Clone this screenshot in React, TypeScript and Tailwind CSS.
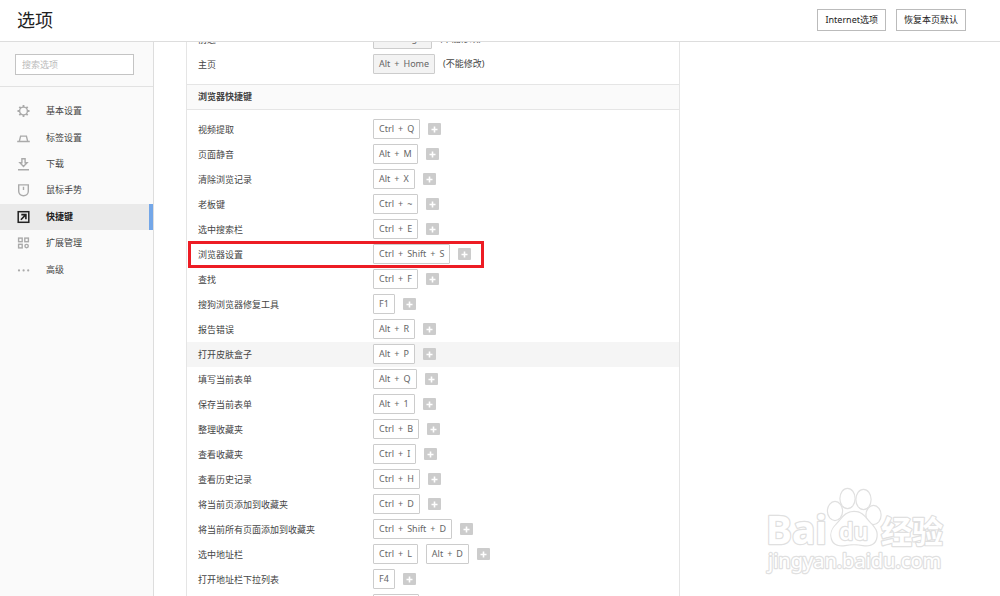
import { Fragment } from 'react';
import type { ReactNode } from 'react';

type Shortcut = {
  label: string;
  keys: string[];
  locked?: boolean;
  hovered?: boolean;
  marked?: boolean;
};

const pageShortcuts: Shortcut[] = [
  { label: '前进', keys: ['Alt + Right'], locked: true },
  { label: '主页', keys: ['Alt + Home'], locked: true },
];

const browserShortcuts: Shortcut[] = [
  { label: '视频提取', keys: ['Ctrl + Q'] },
  { label: '页面静音', keys: ['Alt + M'] },
  { label: '清除浏览记录', keys: ['Alt + X'] },
  { label: '老板键', keys: ['Ctrl + ~'] },
  { label: '选中搜索栏', keys: ['Ctrl + E'] },
  { label: '浏览器设置', keys: ['Ctrl + Shift + S'], marked: true },
  { label: '查找', keys: ['Ctrl + F'] },
  { label: '搜狗浏览器修复工具', keys: ['F1'] },
  { label: '报告错误', keys: ['Alt + R'] },
  { label: '打开皮肤盒子', keys: ['Alt + P'], hovered: true },
  { label: '填写当前表单', keys: ['Alt + Q'] },
  { label: '保存当前表单', keys: ['Alt + 1'] },
  { label: '整理收藏夹', keys: ['Ctrl + B'] },
  { label: '查看收藏夹', keys: ['Ctrl + I'] },
  { label: '查看历史记录', keys: ['Ctrl + H'] },
  { label: '将当前页添加到收藏夹', keys: ['Ctrl + D'] },
  { label: '将当前所有页面添加到收藏夹', keys: ['Ctrl + Shift + D'] },
  { label: '选中地址栏', keys: ['Ctrl + L', 'Alt + D'] },
  { label: '打开地址栏下拉列表', keys: ['F4'] },
  { label: '刷新', keys: ['Ctrl + R'] },
];

function Icon({ children }: { children: ReactNode }) {
  return (
    <svg viewBox="0 0 14 14" className="size-3.5 shrink-0" fill="none" stroke="currentColor" strokeWidth="1.4" aria-hidden="true">
      {children}
    </svg>
  );
}

const navItems: { label: string; icon: ReactNode; active?: boolean }[] = [
  {
    label: '基本设置',
    icon: (
      <>
        <circle cx="7.500" cy="7" r="3.9" />
        <path d="M7.500 1v2M7.500 11v2M1.500 7h2M11.500 7h2M3.300 2.800l1.400 1.400M10.300 9.800l1.400 1.400M3.300 11.200l1.400-1.400M10.300 4.200l1.400-1.400" strokeWidth="1.8" />
      </>
    ),
  },
  { label: '标签设置', icon: <path d="M1.200 10.500h12.600M3.300 10.300l1.300-5.200h5.800l1.300 5.200" /> },
  { label: '下载', icon: <path d="M5.900 1.700h3.200v4h2L7.500 9.500 3.900 5.700h2zM2 12.700h11" /> },
  { label: '鼠标手势', icon: <path d="M2.700 1.900h9.600v6.300c0 2.600-2.100 4.500-4.800 4.500s-4.800-1.900-4.800-4.500zM7.500 3.700v3.300" /> },
  {
    label: '快捷键',
    active: true,
    icon: (
      <>
        <rect x="2.200" y="1.700" width="10.600" height="10.600" strokeWidth="1.500" />
        <path d="M4.900 9.700l4.700-4.800M5.300 4.600h4.600v4.600" strokeWidth="1.600" />
      </>
    ),
  },
  {
    label: '扩展管理',
    icon: (
      <>
        <rect x="2.600" y="2.100" width="3.600" height="3.600" />
        <rect x="8.800" y="2.100" width="3.600" height="3.600" />
        <rect x="2.600" y="8.300" width="3.600" height="3.600" />
        <circle cx="10.600" cy="10.100" r="1.700" />
      </>
    ),
  },
  {
    label: '高级',
    icon: (
      <g fill="currentColor" stroke="none">
        <circle cx="3" cy="7.400" r="1.100" />
        <circle cx="7.600" cy="7.400" r="1.100" />
        <circle cx="12.200" cy="7.400" r="1.100" />
      </g>
    ),
  },
];

function KeyCombo({ combo, locked }: { combo: string; locked?: boolean }) {
  return (
    <button
      type="button"
      disabled={locked}
      className={
        locked
          ? 'flex h-5 items-center gap-1 rounded-[1px] border border-[#ccc] bg-[#f3f3f3] px-[5px] text-[#666]'
          : 'flex h-5 items-center gap-1 rounded-[1px] border border-[#ccc] bg-white px-[5px] text-[#666]'
      }
    >
      {combo.split(' + ').map((name, index) => (
        <Fragment key={name}>
          {index > 0 && <span>+</span>}
          <span>{name}</span>
        </Fragment>
      ))}
    </button>
  );
}

function ShortcutTable({ caption, rows }: { caption: string; rows: Shortcut[] }) {
  return (
    <table aria-label={caption} className="my-[7px] w-full table-fixed border-collapse">
      <tbody>
        {rows.map((row) => (
          <tr key={row.label} className={row.hovered ? 'h-[25px] bg-[#f5f5f5]' : 'h-[25px]'}>
            <th scope="row" className="relative w-[186px] p-0 pl-[11px] text-left font-normal whitespace-nowrap">
              {row.label}
              {row.marked && (
                <span className="pointer-events-none absolute -top-px left-px z-10 h-[27px] w-[296px] border-[3px] border-[#ed1c24]" />
              )}
            </th>
            <td className="p-0 pb-px">
              <div className="flex items-center gap-2">
                {row.keys.map((key) => (
                  <KeyCombo key={key} combo={key} locked={row.locked} />
                ))}
                {row.locked ? (
                  <span>(不能修改)</span>
                ) : (
                  <button type="button" aria-label="添加快捷键" className="flex h-3 w-[13px] items-center justify-center rounded-[1px] bg-[#ccc] text-white">
                    <svg viewBox="0 0 7 7" className="size-[7px]" stroke="currentColor" strokeWidth="1.6" aria-hidden="true">
                      <path d="M3.5 .5v6M.5 3.5h6" />
                    </svg>
                  </button>
                )}
              </div>
            </td>
          </tr>
        ))}
      </tbody>
    </table>
  );
}

function Watermark() {
  return (
    <svg viewBox="0 0 190 96" className="pointer-events-none absolute right-[50px] bottom-4 h-24 w-[190px]" aria-hidden="true">
      <g fill="#fff" stroke="#e0e0e0" strokeWidth="2.400" paintOrder="stroke" strokeLinejoin="round">
        <text x="6" y="60" className='font-["Noto_Sans"] text-[39px] font-bold'>Bai</text>
        <ellipse cx="75" cy="27" rx="7" ry="9" />
        <ellipse cx="87.500" cy="14.500" rx="7" ry="9.500" />
        <ellipse cx="103.500" cy="15.500" rx="7" ry="9.500" />
        <ellipse cx="113.500" cy="31" rx="7" ry="9" />
        <path d="M94 28c-9 0-12 7-17 12s-7 9-5 15c2 6 8 7 13 6s13-1 18 0 11 0 13-6c2-7-1-11-6-16s-7-11-16-11z" />
        <text x="79" y="56" className='font-["Noto_Sans"] text-[23px] font-semibold'>du</text>
        <text x="121" y="59" className='font-["Noto_Sans_CJK_SC"] text-[31px] font-bold'>经验</text>
        <text x="8" y="84" className='font-["Noto_Sans"] text-[20px]'>jingyan.baidu.com</text>
      </g>
    </svg>
  );
}

export default function App() {
  return (
    <div className='relative flex h-screen flex-col overflow-hidden bg-white font-["Noto_Sans","Noto_Sans_CJK_SC",sans-serif] text-[9px] leading-3 text-[#444]'>
      <header className="flex h-[42px] shrink-0 items-center justify-between border-b border-[#ddd] bg-white pr-[34px] pb-0.5 pl-[17px]">
        <h1 className="text-[18px] leading-6 text-[#222]">选项</h1>
        <div className="flex gap-2.5">
          <button type="button" className="h-[22px] border border-[#bbb] bg-white px-[7px] text-[#222]">Internet选项</button>
          <button type="button" className="h-[22px] border border-[#bbb] bg-white px-[7px] text-[#222]">恢复本页默认</button>
        </div>
      </header>

      <div className="flex min-h-0 flex-1">
        <aside className="w-[154px] shrink-0 border-r border-[#ddd] bg-[#fafafa]">
          <div className="border-b border-[#e2e2e2] pt-3 pr-[19px] pb-[11px] pl-[15px]">
            <input
              type="search"
              aria-label="搜索选项"
              placeholder="搜索选项"
              className="block h-[21px] w-full border border-[#c4c4c4] bg-white px-1.5 placeholder:text-[#bbb]"
            />
          </div>
          <nav className="mt-[11px] grid h-[185px] grid-rows-7">
            {navItems.map((item) => (
              <a
                key={item.label}
                href="#"
                aria-current={item.active ? 'page' : undefined}
                className={
                  item.active
                    ? 'flex items-center gap-4 border-r-4 border-[#74a7e8] bg-[#eaeaea] pl-4 font-bold text-[#222]'
                    : 'flex items-center gap-4 pl-4 text-[#aaa]'
                }
              >
                <Icon>{item.icon}</Icon>
                <span className={item.active ? 'text-[#222]' : 'text-[#444]'}>{item.label}</span>
              </a>
            ))}
          </nav>
        </aside>

        <main className="min-w-0 flex-1 overflow-hidden pr-8 pl-8">
          <section className="-mt-[22px] max-w-[494px] border-x border-[#e5e5e5]">
            <ShortcutTable caption="页面快捷键" rows={pageShortcuts} />
            <h2 className="flex h-[26px] items-center border-t border-b border-[#e5e5e5] bg-[#fafafa] pl-[11px] font-bold">浏览器快捷键</h2>
            <ShortcutTable caption="浏览器快捷键" rows={browserShortcuts} />
          </section>
        </main>
      </div>
      <Watermark />
    </div>
  );
}
